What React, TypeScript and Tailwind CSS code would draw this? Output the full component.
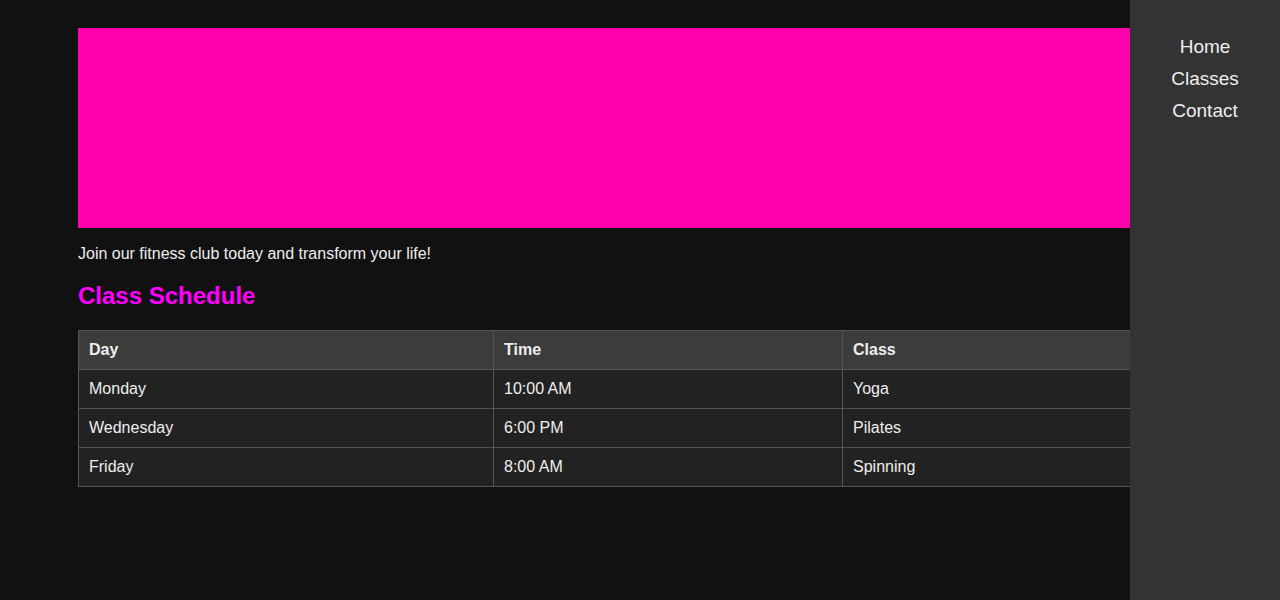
import React from "react";

const rows = [
  { day: "Monday", time: "10:00 AM", cls: "Yoga" },
  { day: "Wednesday", time: "6:00 PM", cls: "Pilates" },
  { day: "Friday", time: "8:00 AM", cls: "Spinning" },
];

const navLinks = ["Home", "Classes", "Contact"];

export default function App() {
  return (
    <div className="min-h-screen bg-[#111111] text-[#eeeeee] font-['Liberation_Sans',Arial,sans-serif] overflow-hidden relative">
      <main className="pl-[78px] pt-[28px] w-[1202px]">
        <div className="h-[200px] bg-[#ff00aa]" />
        <p className="mt-[14px] text-[16px] leading-[24px]">
          Join our fitness club today and transform your life!
        </p>
        <h2 className="mt-[14px] text-[24px] leading-[32px] font-bold text-[#ff00ff]">
          Class Schedule
        </h2>
        <table className="mt-[18px] w-full border-collapse text-[16px] text-left">
          <thead>
            <tr className="bg-[#3c3c3c]">
              <th className="w-[415px] h-[39px] px-[10px] border border-[#555555] font-bold">Day</th>
              <th className="w-[349px] h-[39px] px-[10px] border border-[#555555] font-bold">Time</th>
              <th className="h-[39px] px-[10px] border border-[#555555] font-bold">Class</th>
            </tr>
          </thead>
          <tbody>
            {rows.map((r) => (
              <tr key={r.day} className="bg-[#222222]">
                <td className="h-[39px] px-[10px] border border-[#555555]">{r.day}</td>
                <td className="h-[39px] px-[10px] border border-[#555555]">{r.time}</td>
                <td className="h-[39px] px-[10px] border border-[#555555]">{r.cls}</td>
              </tr>
            ))}
          </tbody>
        </table>
      </main>
      <nav className="fixed top-0 right-0 h-full w-[150px] bg-[#333333] pt-[31px] flex flex-col items-center">
        {navLinks.map((l) => (
          <a key={l} href="#" className="text-[19px] leading-[32px] text-[#eeeeee]">
            {l}
          </a>
        ))}
      </nav>
    </div>
  );
}
